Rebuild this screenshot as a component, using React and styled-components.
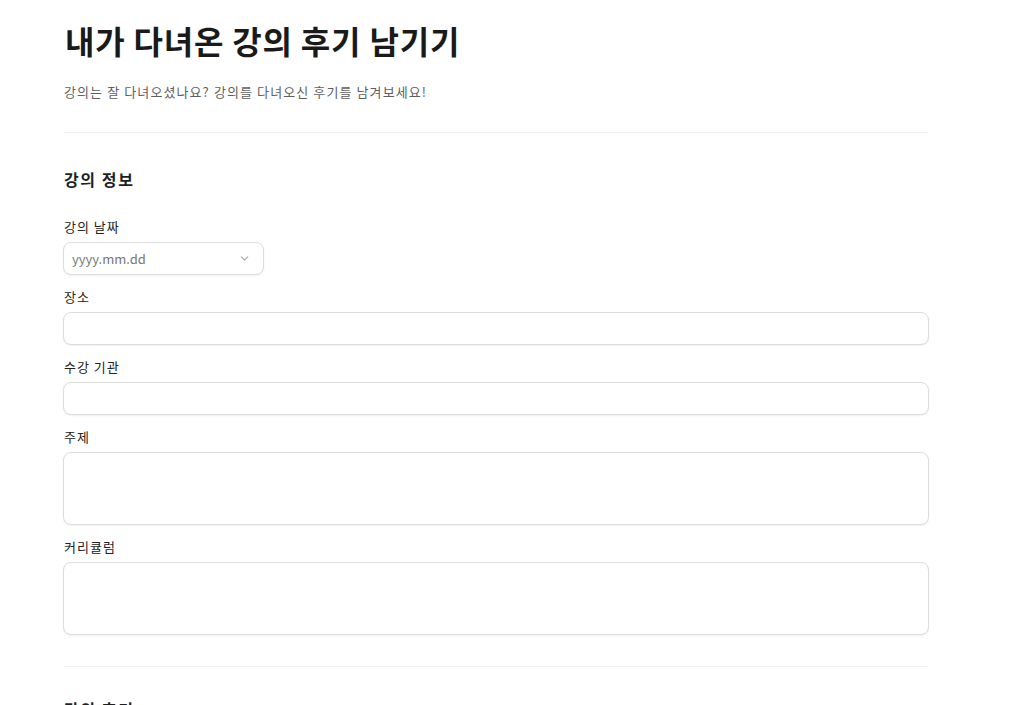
import React from 'react';
import styled, { createGlobalStyle } from 'styled-components';
import { ChevronDown } from 'lucide-react';

const GlobalStyle = createGlobalStyle`
    body {
        margin: 0;
        background: #fff;
        font-family: "Noto Sans CJK KR", "Noto Sans", sans-serif;
        color: #1f1f1f;
    }
    * {
        box-sizing: border-box;
    }
`;

const Page = styled.main`
    width: 866px;
    margin-left: 63px;
    padding-top: 19px;
`;

const Title = styled.h1`
    margin: 0;
    font-size: 32px;
    line-height: 42px;
    font-weight: 700;
    letter-spacing: 0.8px;
    color: #1a1a1a;
    padding-left: 2px;
`;

const Subtitle = styled.p`
    margin: 21px 0 0;
    font-size: 13px;
    line-height: 20px;
    letter-spacing: 1.1px;
    color: #5f5f5f;
    padding-left: 1px;
`;

const Divider = styled.hr`
    margin: ${(p) => (p.$flush ? '0 1px' : '30px 1px 0')};
    border: 0;
    border-top: 1px solid #efefef;
`;

const Section = styled.section`
    padding: ${(p) => (p.$last ? '30px 0 0' : '34px 0 31px')};
`;

const SectionTitle = styled.h2`
    margin: 0 0 26px;
    padding-left: 1px;
    font-size: 16px;
    line-height: 24px;
    font-weight: 700;
    letter-spacing: 1.6px;
    color: #1f1f1f;
`;

const Fields = styled.div`
    display: flex;
    flex-direction: column;
    gap: 12px;
`;

const Field = styled.label`
    display: flex;
    flex-direction: column;
    gap: 5px;
`;

const Label = styled.span`
    font-size: 13px;
    line-height: 20px;
    letter-spacing: 1px;
    color: #222;
    padding-left: 1px;
`;

const boxStyle = `
    border: 1px solid #dcdcdc;
    border-radius: 8px;
    background: #fff;
    box-shadow: 0 1px 2px rgba(0, 0, 0, 0.06);
    font-family: inherit;
    font-size: 13px;
    outline: none;
`;

const DateSelect = styled.div`
    ${boxStyle}
    width: 201px;
    height: 33px;
    display: flex;
    align-items: center;
    justify-content: space-between;
    padding: 0 12px 0 8px;
    color: #777;
`;

const TextInput = styled.input`
    ${boxStyle}
    width: 100%;
    height: 33px;
    padding: 0 8px;
`;

const TextArea = styled.textarea`
    ${boxStyle}
    width: 100%;
    height: ${(p) => p.rows * 24 + 1}px;
    padding: 8px;
    resize: none;
`;

function App() {
    return (
        <>
            <GlobalStyle />
            <Page>
                <Title>내가 다녀온 강의 후기 남기기</Title>
                <Subtitle>
                    강의는 잘 다녀오셨나요? 강의를 다녀오신 후기를 남겨보세요!
                </Subtitle>
                <Divider />

                <Section>
                    <SectionTitle>강의 정보</SectionTitle>
                    <Fields>
                        <Field>
                            <Label>강의 날짜</Label>
                            <DateSelect>
                                yyyy.mm.dd
                                <ChevronDown size={13} color="#a8a8a8" />
                            </DateSelect>
                        </Field>
                        <Field>
                            <Label>장소</Label>
                            <TextInput />
                        </Field>
                        <Field>
                            <Label>수강 기관</Label>
                            <TextInput />
                        </Field>
                        <Field>
                            <Label>주제</Label>
                            <TextArea rows={3} />
                        </Field>
                        <Field>
                            <Label>커리큘럼</Label>
                            <TextArea rows={3} />
                        </Field>
                    </Fields>
                </Section>
                <Divider $flush />

                <Section $last>
                    <SectionTitle>강의 후기</SectionTitle>
                </Section>
            </Page>
        </>
    );
}

export default App;
